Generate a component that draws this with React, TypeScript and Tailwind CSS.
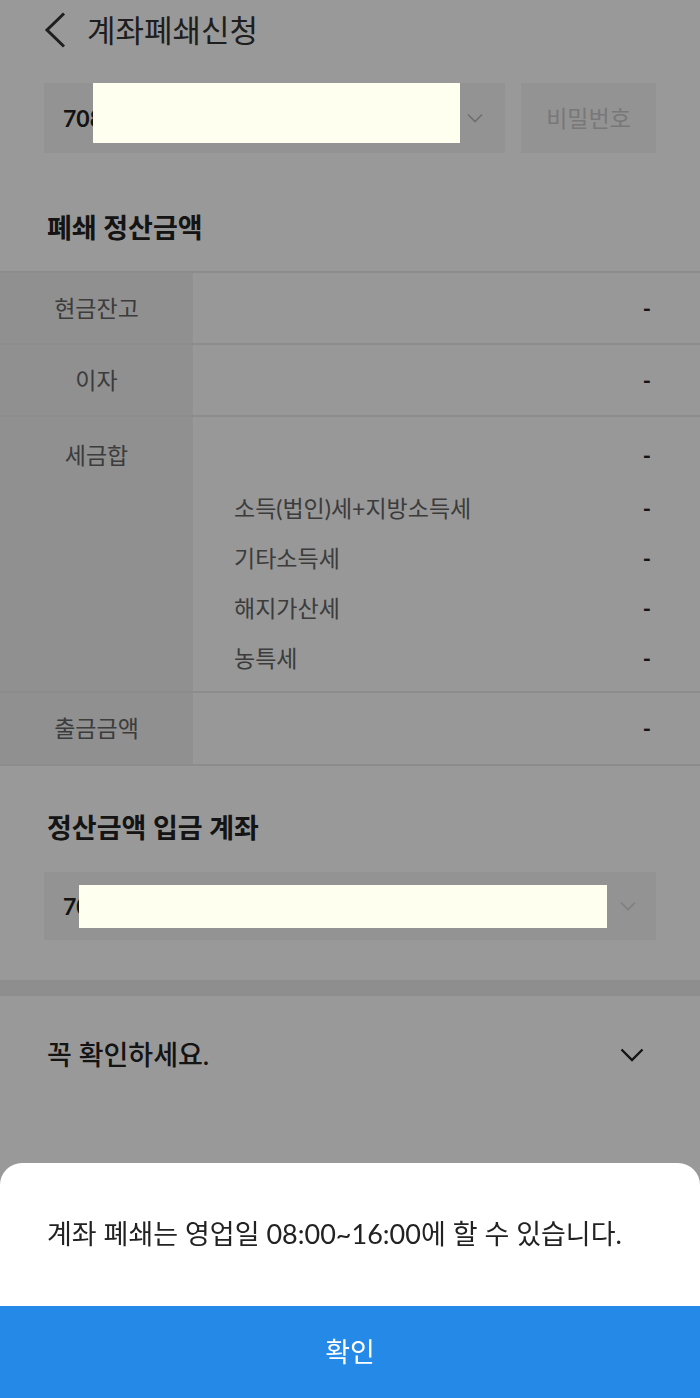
import React from "react";

const rows = [
  { label: "현금잔고", value: "-" },
  { label: "이자", value: "-" },
];

const taxItems = ["소득(법인)세+지방소득세", "기타소득세", "해지가산세", "농특세"];

const Chevron = ({ className }: { className?: string }) => (
  <svg viewBox="0 0 16 10" className={className} fill="none" stroke="currentColor" strokeWidth={1.6}>
    <path d="M1 1.5 L8 8.5 L15 1.5" />
  </svg>
);

const App = () => {
  return (
    <div className="relative min-h-[1398px] bg-white text-[#333] font-['Lato','Noto_Sans_CJK_KR',sans-serif]">
      {/* header */}
      <div className="flex h-[60px] items-center pl-[44px]">
        <svg viewBox="0 0 22 36" className="h-[36px] w-[22px] text-[#333]" fill="none" stroke="currentColor" strokeWidth={3}>
          <path d="M20 1.5 L3 18 L20 34.5" />
        </svg>
        <h1 className="ml-[21px] text-[31px] leading-none text-[#333]">계좌폐쇄신청</h1>
      </div>

      {/* account select */}
      <div className="mt-[23px] flex gap-4 px-[44px]">
        <div className="relative flex h-[70px] w-[461px] items-center bg-[#f5f5f5] pl-[19px] pr-[22px]">
          <span className="text-[23px] font-bold text-[#222]">708</span>
          <span className="absolute left-[49px] top-0 z-20 h-[60px] w-[367px] bg-[#fffff0]" />
          <Chevron className="ml-auto h-[10px] w-[16px] text-[#b8b8b8]" />
        </div>
        <div className="flex h-[70px] w-[135px] items-center justify-center bg-[#f5f5f5] text-[23px] text-[#c9c9c9]">
          비밀번호
        </div>
      </div>

      {/* settlement */}
      <h2 className="mt-[57px] px-[47px] text-[27px] font-bold leading-[36px] text-[#222]">폐쇄 정산금액</h2>

      <div className="mt-[25px] border-b-2 border-[#e9e9e9]">
        {rows.map((r) => (
          <div key={r.label} className="grid h-[72px] grid-cols-[193px_1fr] gap-x-[3px] border-t-2 border-[#e9e9e9]">
            <div className="flex items-center justify-center bg-[#f0f0f0] text-[23px] text-[#646464]">{r.label}</div>
            <div className="flex items-center justify-end bg-[#fdfdfd] pr-[49px] text-[22px] font-bold text-[#222]">{r.value}</div>
          </div>
        ))}

        <div className="grid h-[276px] grid-cols-[193px_1fr] gap-x-[3px] border-t-2 border-[#e9e9e9]">
          <div className="bg-[#f0f0f0] pt-[22px] text-center text-[23px] leading-[32px] text-[#646464]">세금합</div>
          <div className="bg-[#fdfdfd] pr-[49px] pt-[22px]">
            <div className="flex h-[32px] items-center justify-end text-[22px] font-bold text-[#222]">-</div>
            <div className="mt-[12px] pl-[38px]">
              {taxItems.map((t) => (
                <div key={t} className="flex h-[50px] items-center justify-between text-[23px] text-[#646464]">
                  <span>{t}</span>
                  <span className="text-[22px] font-bold text-[#222]">-</span>
                </div>
              ))}
            </div>
          </div>
        </div>

        <div className="grid h-[73px] grid-cols-[193px_1fr] gap-x-[3px] border-t-2 border-[#e9e9e9]">
          <div className="flex items-center justify-center bg-[#f0f0f0] text-[23px] text-[#646464]">출금금액</div>
          <div className="flex items-center justify-end bg-[#fdfdfd] pr-[49px] text-[22px] font-bold text-[#222]">-</div>
        </div>
      </div>

      {/* deposit account */}
      <h2 className="mt-[44px] px-[47px] text-[27px] font-bold leading-[36px] text-[#222]">정산금액 입금 계좌</h2>
      <div className="px-[44px]">
        <div className="relative mt-[26px] flex h-[68px] items-center bg-[#f5f5f5] pl-[19px] pr-[20px]">
          <span className="text-[23px] font-bold text-[#222]">70</span>
          <span className="absolute left-[35px] top-[13px] z-20 h-[43px] w-[528px] bg-[#fffff0]" />
          <Chevron className="ml-auto h-[10px] w-[16px] text-[#d4d4d4]" />
        </div>
      </div>

      <div className="mt-[40px] h-[16px] bg-[#ededed]" />

      <div className="flex h-[118px] items-center justify-between pl-[47px] pr-[56px]">
        <span className="text-[27px] font-medium text-[#222]">꼭 확인하세요.</span>
        <svg viewBox="0 0 24 14" className="h-[14px] w-[24px] text-[#222]" fill="none" stroke="currentColor" strokeWidth={2.4}>
          <path d="M1.5 1.5 L12 12 L22.5 1.5" />
        </svg>
      </div>

      {/* dim */}
      <div className="fixed inset-0 z-10 bg-black/40" />

      {/* bottom sheet */}
      <div className="fixed inset-x-0 bottom-0 z-20 overflow-hidden rounded-t-[22px] bg-white">
        <div className="flex h-[143px] items-center px-[47px] text-[27px] text-[#222]">
          계좌 폐쇄는 영업일 08:00~16:00에 할 수 있습니다.
        </div>
        <button type="button" className="flex h-[92px] w-full items-center justify-center bg-[#2589e8] text-[27px] text-white">
          확인
        </button>
      </div>
    </div>
  );
};

export default App;
